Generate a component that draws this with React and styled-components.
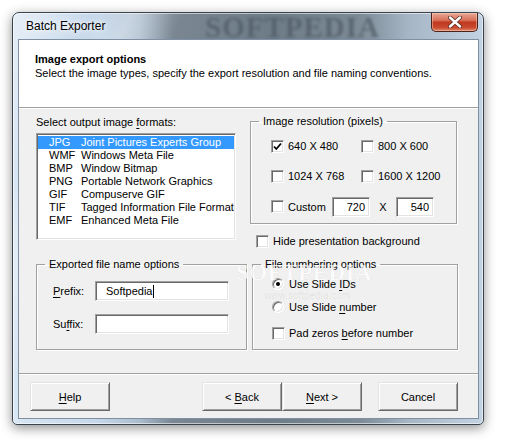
import styled, { createGlobalStyle } from 'styled-components';

const GlobalStyle = createGlobalStyle`
  html, body {
    margin: 0;
    padding: 0;
    background: #fff;
  }
  body {
    font-family: "Liberation Sans", Arial, sans-serif;
    font-size: 11px;
    color: #000;
  }
`;

const Page = styled.div`
  width: 505px;
  height: 446px;
  padding: 12px 0 0 12px;
  box-sizing: border-box;
  overflow: hidden;
`;

const Window = styled.div`
  width: 472px;
  height: 413px;
  box-sizing: border-box;
  display: flex;
  flex-direction: column;
  padding: 0 5px 6px 6px;
  border: 1px solid #39444f;
  border-radius: 7px 7px 5px 5px;
  background:
    linear-gradient(115deg, rgba(255,255,255,0.35) 0%, rgba(255,255,255,0) 12%, rgba(255,255,255,0.3) 18%, rgba(255,255,255,0) 26%),
    linear-gradient(90deg, #d9e6f3 0%, #c5d7ea 18%, #aabbcc 27%, #7a8793 34%, #6e7c88 55%, #7d8b97 74%, #a6b5c4 84%, #c3d3e3 100%);
  box-shadow: 0 3px 12px rgba(0, 0, 0, 0.45), inset 0 0 0 1px rgba(255, 255, 255, 0.55);
`;

const TitleBar = styled.div`
  position: relative;
  height: 27px;
  display: flex;
  justify-content: space-between;
  align-items: flex-start;
`;

const Title = styled.div`
  position: relative;
  z-index: 1;
  padding: 6px 0 0 7px;
  font-size: 12px;
  line-height: 15px;
  color: #000;
  text-shadow: 0 0 8px #fff, 0 0 4px #fff;
`;

const GlassMark = styled.div`
  position: absolute;
  left: 186px;
  top: -2px;
  font-family: "Liberation Serif", serif;
  font-weight: bold;
  font-size: 29px;
  letter-spacing: 1px;
  color: #4d5964;
  opacity: 0.7;
  filter: blur(1.4px);
  pointer-events: none;
`;

const CloseButton = styled.div`
  position: relative;
  z-index: 1;
  width: 47px;
  height: 19px;
  box-sizing: border-box;
  display: flex;
  align-items: center;
  justify-content: center;
  border: 1px solid #4b231b;
  border-top: none;
  border-radius: 0 0 5px 5px;
  background: linear-gradient(#e9a894 0%, #d9715a 40%, #c0391f 52%, #c84a2f 80%, #e2866a 100%);
  box-shadow: inset 0 0 0 1px rgba(255, 220, 200, 0.45);
`;

const Client = styled.div`
  flex: 1;
  display: flex;
  flex-direction: column;
  background: #f0f0f0;
  box-shadow: 0 0 0 1px #7f90a2;
`;

const Header = styled.div`
  height: 68px;
  box-sizing: border-box;
  padding: 12px 16px 0;
  background: #fff;
  border-bottom: 1px solid #a0a0a0;
  box-shadow: 0 1px 0 #fff;
  line-height: 14px;
`;

const HeaderTitle = styled.div`
  font-weight: bold;
`;

const Body = styled.div`
  position: relative;
  flex: 1;
  padding: 7px 20px 0 17px;
`;

const TopRow = styled.div`
  display: grid;
  grid-template-columns: 200px 207px;
  column-gap: 14px;
`;

const BottomRow = styled.div`
  display: grid;
  grid-template-columns: 211px 206px;
  column-gap: 5px;
  margin-top: 9px;
`;

const Label = styled.div`
  line-height: 14px;
  margin-bottom: 4px;
`;

const Key = styled.span`
  text-decoration: underline;
  text-underline-offset: 2px;
`;

const sunken = `
  border: 1px solid;
  border-color: #a0a0a0 #fff #fff #a0a0a0;
  box-shadow: inset 1px 1px 0 #696969, inset -1px -1px 0 #e3e3e3;
`;

const ListBox = styled.div`
  height: 107px;
  box-sizing: border-box;
  padding: 2px 1px;
  background: #fff;
  ${sunken}
`;

const ListRow = styled.div`
  display: grid;
  grid-template-columns: 32px 1fr;
  padding-left: 11px;
  height: 13px;
  line-height: 13px;
  white-space: nowrap;
  overflow: hidden;
  background: ${p => (p.$selected ? '#3399ff' : 'transparent')};
  color: ${p => (p.$selected ? '#fff' : '#000')};
`;

const Group = styled.fieldset`
  margin: ${p => p.$margin || '0'};
  min-width: 0;
  border: 1px solid #a0a0a0;
  box-shadow: 1px 1px 0 #fff, inset 1px 1px 0 #fff;
  padding: ${p => p.$pad};
`;

const Legend = styled.legend`
  margin-left: 8px;
  padding: 0 4px;
  line-height: 14px;
`;

const GroupBody = styled.div`
  padding-left: ${p => p.$left};
`;

const ResGrid = styled.div`
  display: grid;
  grid-template-columns: 90px 1fr;
  grid-auto-rows: 20px;
  row-gap: 10px;
  align-items: center;
`;

const CustomRow = styled.div`
  grid-column: span 2;
  display: flex;
  align-items: center;
  margin-top: 1px;
`;

const CheckLabel = styled.label`
  display: flex;
  align-items: center;
  gap: 4px;
  height: 14px;
  line-height: 14px;
  white-space: nowrap;
  width: ${p => p.$width || 'auto'};
  margin-top: ${p => p.$top || '0'};
  margin-left: ${p => p.$left || '0'};
`;

const Box = styled.span`
  width: 13px;
  height: 13px;
  box-sizing: border-box;
  flex: none;
  display: flex;
  align-items: center;
  justify-content: center;
  background: #fff;
  ${sunken}
`;

const Radio = styled.span`
  width: 12px;
  height: 12px;
  box-sizing: border-box;
  flex: none;
  margin-right: 1px;
  border-radius: 50%;
  background: #fff;
  border: 1px solid;
  border-color: #a0a0a0 #fff #fff #a0a0a0;
  box-shadow: inset 1px 1px 0 #696969, inset -1px -1px 0 #e3e3e3;
  display: flex;
  align-items: center;
  justify-content: center;
  &::after {
    content: '';
    width: 4px;
    height: 4px;
    border-radius: 50%;
    background: ${p => (p.$on ? '#000' : 'transparent')};
  }
`;

const Input = styled.div`
  width: ${p => p.$width};
  height: 20px;
  box-sizing: border-box;
  display: flex;
  align-items: center;
  justify-content: ${p => (p.$right ? 'flex-end' : 'flex-start')};
  padding: ${p => (p.$right ? '0 4px 0 0' : '0 0 0 10px')};
  background: #fff;
  ${sunken}
`;

const Caret = styled.span`
  display: inline-block;
  width: 1px;
  height: 13px;
  margin-left: 1px;
  background: #000;
`;

const Times = styled.span`
  width: 26px;
  text-align: center;
`;

const FieldRow = styled.div`
  display: flex;
  align-items: center;
  height: 20px;
  & + & {
    margin-top: 13px;
  }
`;

const FieldLabel = styled.span`
  width: 42px;
`;

const Watermark = styled.div`
  position: absolute;
  left: 217px;
  top: 152px;
  pointer-events: none;
  color: rgba(255, 255, 255, 0.75);
  -webkit-text-stroke: 0.5px rgba(0, 0, 0, 0.1);
  font-family: "Liberation Serif", serif;
  font-weight: bold;
  font-size: 23px;
  letter-spacing: 0.5px;
  & small {
    display: block;
    margin: 4px 0 0 28px;
    font-family: "Liberation Sans", sans-serif;
    font-weight: normal;
    font-size: 10px;
    letter-spacing: 0;
    color: rgba(0, 0, 0, 0.08);
    -webkit-text-stroke: 0;
  }
`;

const Footer = styled.div`
  height: 45px;
  box-sizing: border-box;
  display: flex;
  align-items: flex-start;
  padding: 8px 20px 0 11px;
  border-top: 1px solid #a0a0a0;
  box-shadow: inset 0 1px 0 #fff;
`;

const Button = styled.div`
  width: 80px;
  height: 29px;
  box-sizing: border-box;
  display: flex;
  align-items: center;
  justify-content: center;
  background: #f0f0f0;
  border: 1px solid;
  border-color: #e3e3e3 #696969 #696969 #e3e3e3;
  box-shadow: inset 1px 1px 0 #fff, inset -1px -1px 0 #a0a0a0;
  margin-left: ${p => p.$gap || '0'};
  white-space: pre;
`;

const formats = [
  ['JPG', 'Joint Pictures Experts Group'],
  ['WMF', 'Windows Meta File'],
  ['BMP', 'Window Bitmap'],
  ['PNG', 'Portable Network Graphics'],
  ['GIF', 'Compuserve GIF'],
  ['TIF', 'Tagged Information File Format'],
  ['EMF', 'Enhanced Meta File'],
];

const Check = ({ checked }) => (
  <Box>
    {checked && (
      <svg width="9" height="9" viewBox="0 0 9 9">
        <path d="M1 4.5 L3.3 7 L8 1.5" fill="none" stroke="#000" strokeWidth="1.8" />
      </svg>
    )}
  </Box>
);

function App() {
  return (
    <Page>
      <GlobalStyle />
      <Window>
        <TitleBar>
          <GlassMark>SOFTPEDIA</GlassMark>
          <Title>Batch Exporter</Title>
          <CloseButton>
            <svg width="14" height="12" viewBox="0 0 14 12">
              <path d="M2 1.5 L12 10.5 M12 1.5 L2 10.5" stroke="#5a2a20" strokeWidth="4" strokeLinecap="round" />
              <path d="M2 1.5 L12 10.5 M12 1.5 L2 10.5" stroke="#fff" strokeWidth="2.4" strokeLinecap="round" />
            </svg>
          </CloseButton>
        </TitleBar>
        <Client>
          <Header>
            <HeaderTitle>Image export options</HeaderTitle>
            <div>Select the image types, specify the export resolution and file naming conventions.</div>
          </Header>
          <Body>
            <Watermark>
              SOFTPEDIA
              <small>www.softpedia.com</small>
            </Watermark>
            <TopRow>
              <div>
                <Label>
                  Select output image <Key>f</Key>ormats:
                </Label>
                <ListBox>
                  {formats.map(([ext, name], i) => (
                    <ListRow key={ext} $selected={i === 0}>
                      <span>{ext}</span>
                      <span>{name}</span>
                    </ListRow>
                  ))}
                </ListBox>
              </div>
              <div>
                <Group $pad="8px 8px 7px 0" $margin="-1px 0 0 0">
                  <Legend>Image resolution (pixels)</Legend>
                  <GroupBody $left="20px">
                    <ResGrid>
                      <CheckLabel><Check checked /><span>640 X 480</span></CheckLabel>
                      <CheckLabel><Check /><span>800 X 600</span></CheckLabel>
                      <CheckLabel><Check /><span>1024 X 768</span></CheckLabel>
                      <CheckLabel><Check /><span>1600 X 1200</span></CheckLabel>
                      <CustomRow>
                        <CheckLabel $width="61px"><Check /><span>Custom</span></CheckLabel>
                        <Input $width="38px" $right>720</Input>
                        <Times>X</Times>
                        <Input $width="38px" $right>540</Input>
                      </CustomRow>
                    </ResGrid>
                  </GroupBody>
                </Group>
                <CheckLabel $top="10px" $left="6px"><Check /><span>Hide presentation background</span></CheckLabel>
              </div>
            </TopRow>
            <BottomRow>
              <Group $pad="10px 8px 15px 0">
                <Legend>Exported file name options</Legend>
                <GroupBody $left="16px">
                  <FieldRow>
                    <FieldLabel><Key>P</Key>refix:</FieldLabel>
                    <Input $width="134px">Softpedia<Caret /></Input>
                  </FieldRow>
                  <FieldRow>
                    <FieldLabel>Su<Key>f</Key>fix:</FieldLabel>
                    <Input $width="134px" />
                  </FieldRow>
                </GroupBody>
              </Group>
              <Group $pad="6px 8px 9px 0">
                <Legend>File numbering options</Legend>
                <GroupBody $left="19px">
                  <CheckLabel><Radio $on /><span>Use Slide <Key>I</Key>Ds</span></CheckLabel>
                  <CheckLabel $top="9px"><Radio /><span>Use Slide <Key>n</Key>umber</span></CheckLabel>
                  <CheckLabel $top="12px"><Check /><span>Pad zeros <Key>b</Key>efore number</span></CheckLabel>
                </GroupBody>
              </Group>
            </BottomRow>
          </Body>
          <Footer>
            <Button><span><Key>H</Key>elp</span></Button>
            <Button $gap="92px"><span>&lt; <Key>B</Key>ack</span></Button>
            <Button><span><Key>N</Key>ext &gt;</span></Button>
            <Button $gap="16px">Cancel</Button>
          </Footer>
        </Client>
      </Window>
    </Page>
  );
}

export default App;
